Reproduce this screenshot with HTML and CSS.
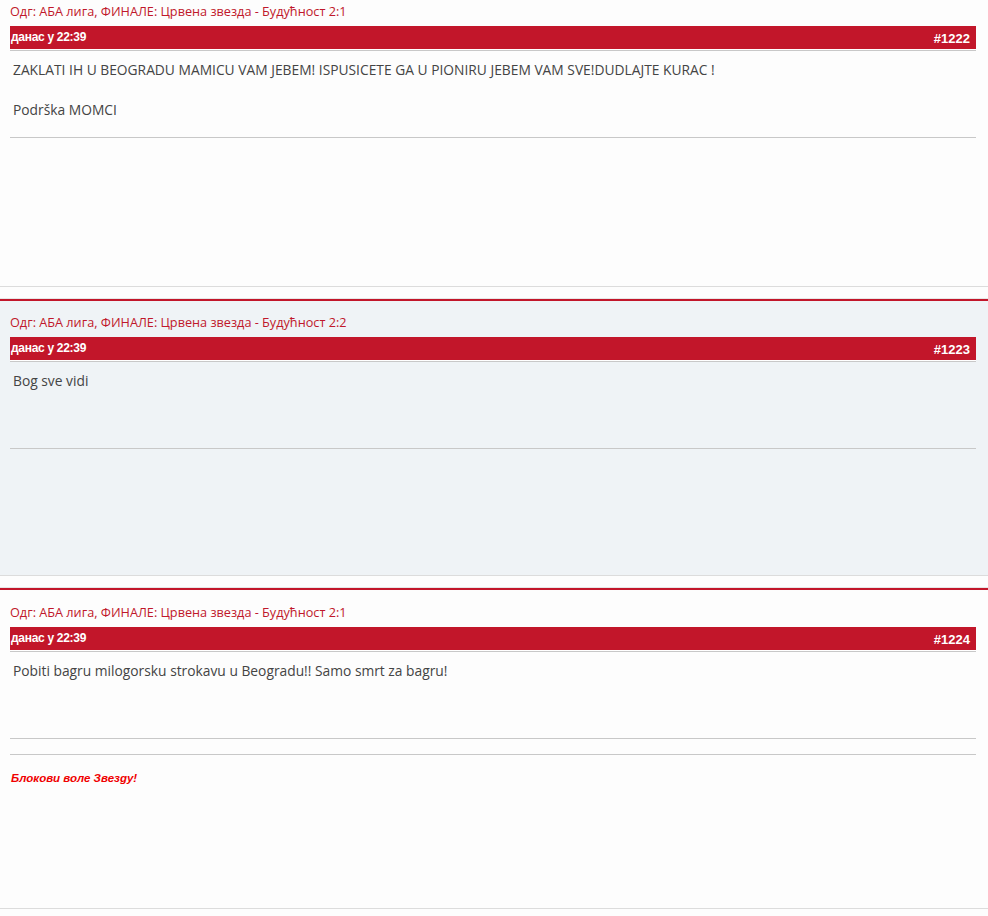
FILE: index.html
```html
<!DOCTYPE html>
<html lang="sr">
<head>
<meta charset="utf-8">
<title>Форум</title>
<link rel="stylesheet" href="styles.css">
</head>
<body>
<div class="topic">
  <div class="post post--first post--h1">
    <div class="post-title">Одг: АБА лига, ФИНАЛЕ: Црвена звезда - Будућност 2:1</div>
    <div class="post-bar"><span class="post-date">данас у 22:39</span><span class="post-num">#1222</span></div>
    <div class="post-body">ZAKLATI IH U BEOGRADU MAMICU VAM JEBEM! ISPUSICETE GA U PIONIRU JEBEM VAM SVE!DUDLAJTE KURAC !<br><br>Podrška MOMCI</div>
    <div class="post-rule"></div>
  </div>
  <div class="post post--alt post--h2">
    <div class="post-title">Одг: АБА лига, ФИНАЛЕ: Црвена звезда - Будућност 2:2</div>
    <div class="post-bar"><span class="post-date">данас у 22:39</span><span class="post-num">#1223</span></div>
    <div class="post-body">Bog sve vidi</div>
    <div class="post-rule"></div>
  </div>
  <div class="post post--h3">
    <div class="post-title">Одг: АБА лига, ФИНАЛЕ: Црвена звезда - Будућност 2:1</div>
    <div class="post-bar"><span class="post-date">данас у 22:39</span><span class="post-num">#1224</span></div>
    <div class="post-body">Pobiti bagru milogorsku strokavu u Beogradu!! Samo smrt za bagru!</div>
    <div class="post-rule"></div>
    <div class="post-rule post-rule--sig"></div>
    <div class="post-sig">Блокови воле Звезду!</div>
  </div>
</div>
</body>
</html>
```
FILE: styles.css
```css
html, body {
  margin: 0;
  padding: 0;
  background: #fdfdfd;
}
body {
  font-family: "Open Sans", "Liberation Sans", sans-serif;
}
.topic {
  display: flex;
  flex-direction: column;
}
.post {
  box-sizing: border-box;
  padding: 13px 12px 0 10px;
  border-top: 2px solid #c2162a;
  border-bottom: 1px solid #dcdcdc;
  box-shadow: 0 -1px 0 #e6e6e6;
  margin-top: 12px;
  background: #fdfdfd;
}
.post--first {
  border-top: 0;
  box-shadow: none;
  margin-top: 0;
  padding-top: 3px;
}
.post--alt {
  background: #eff3f6;
}
.post--h1 { min-height: 287px; }
.post--h2 { min-height: 277px; }
.post--h3 { min-height: 321px; padding-top: 14px; }
.post-title {
  font-size: 12.7px;
  line-height: 16px;
  color: #c0182b;
  margin-bottom: 7px;
  white-space: nowrap;
}
.post-bar {
  display: flex;
  justify-content: space-between;
  align-items: center;
  height: 23px;
  background: #c2162a;
  color: #fff;
  font-family: "Liberation Sans", Arial, sans-serif;
  font-weight: bold;
  box-shadow: 0 1px 0 #ffffff, 0 2px 0 #c8c8c8;
}
.post-date {
  font-size: 12px;
  letter-spacing: -0.3px;
  padding-left: 1px;
  margin-top: -1px;
}
.post-num {
  font-size: 13px;
  padding-right: 6px;
  margin-top: 1px;
}
.post-body {
  margin-top: 11px;
  min-height: 60px;
  padding: 0 0 17px 3px;
  font-size: 13.8px;
  line-height: 20px;
  color: #444444;
}
.post-rule {
  height: 1px;
  background: #c8c8c8;
}
.post-rule--sig {
  margin-top: 15px;
}
.post-sig {
  margin-top: 15px;
  padding-left: 1px;
  font-family: "Liberation Sans", Arial, sans-serif;
  font-size: 11.5px;
  line-height: 16px;
  font-weight: bold;
  font-style: italic;
  color: #f00000;
}
```
